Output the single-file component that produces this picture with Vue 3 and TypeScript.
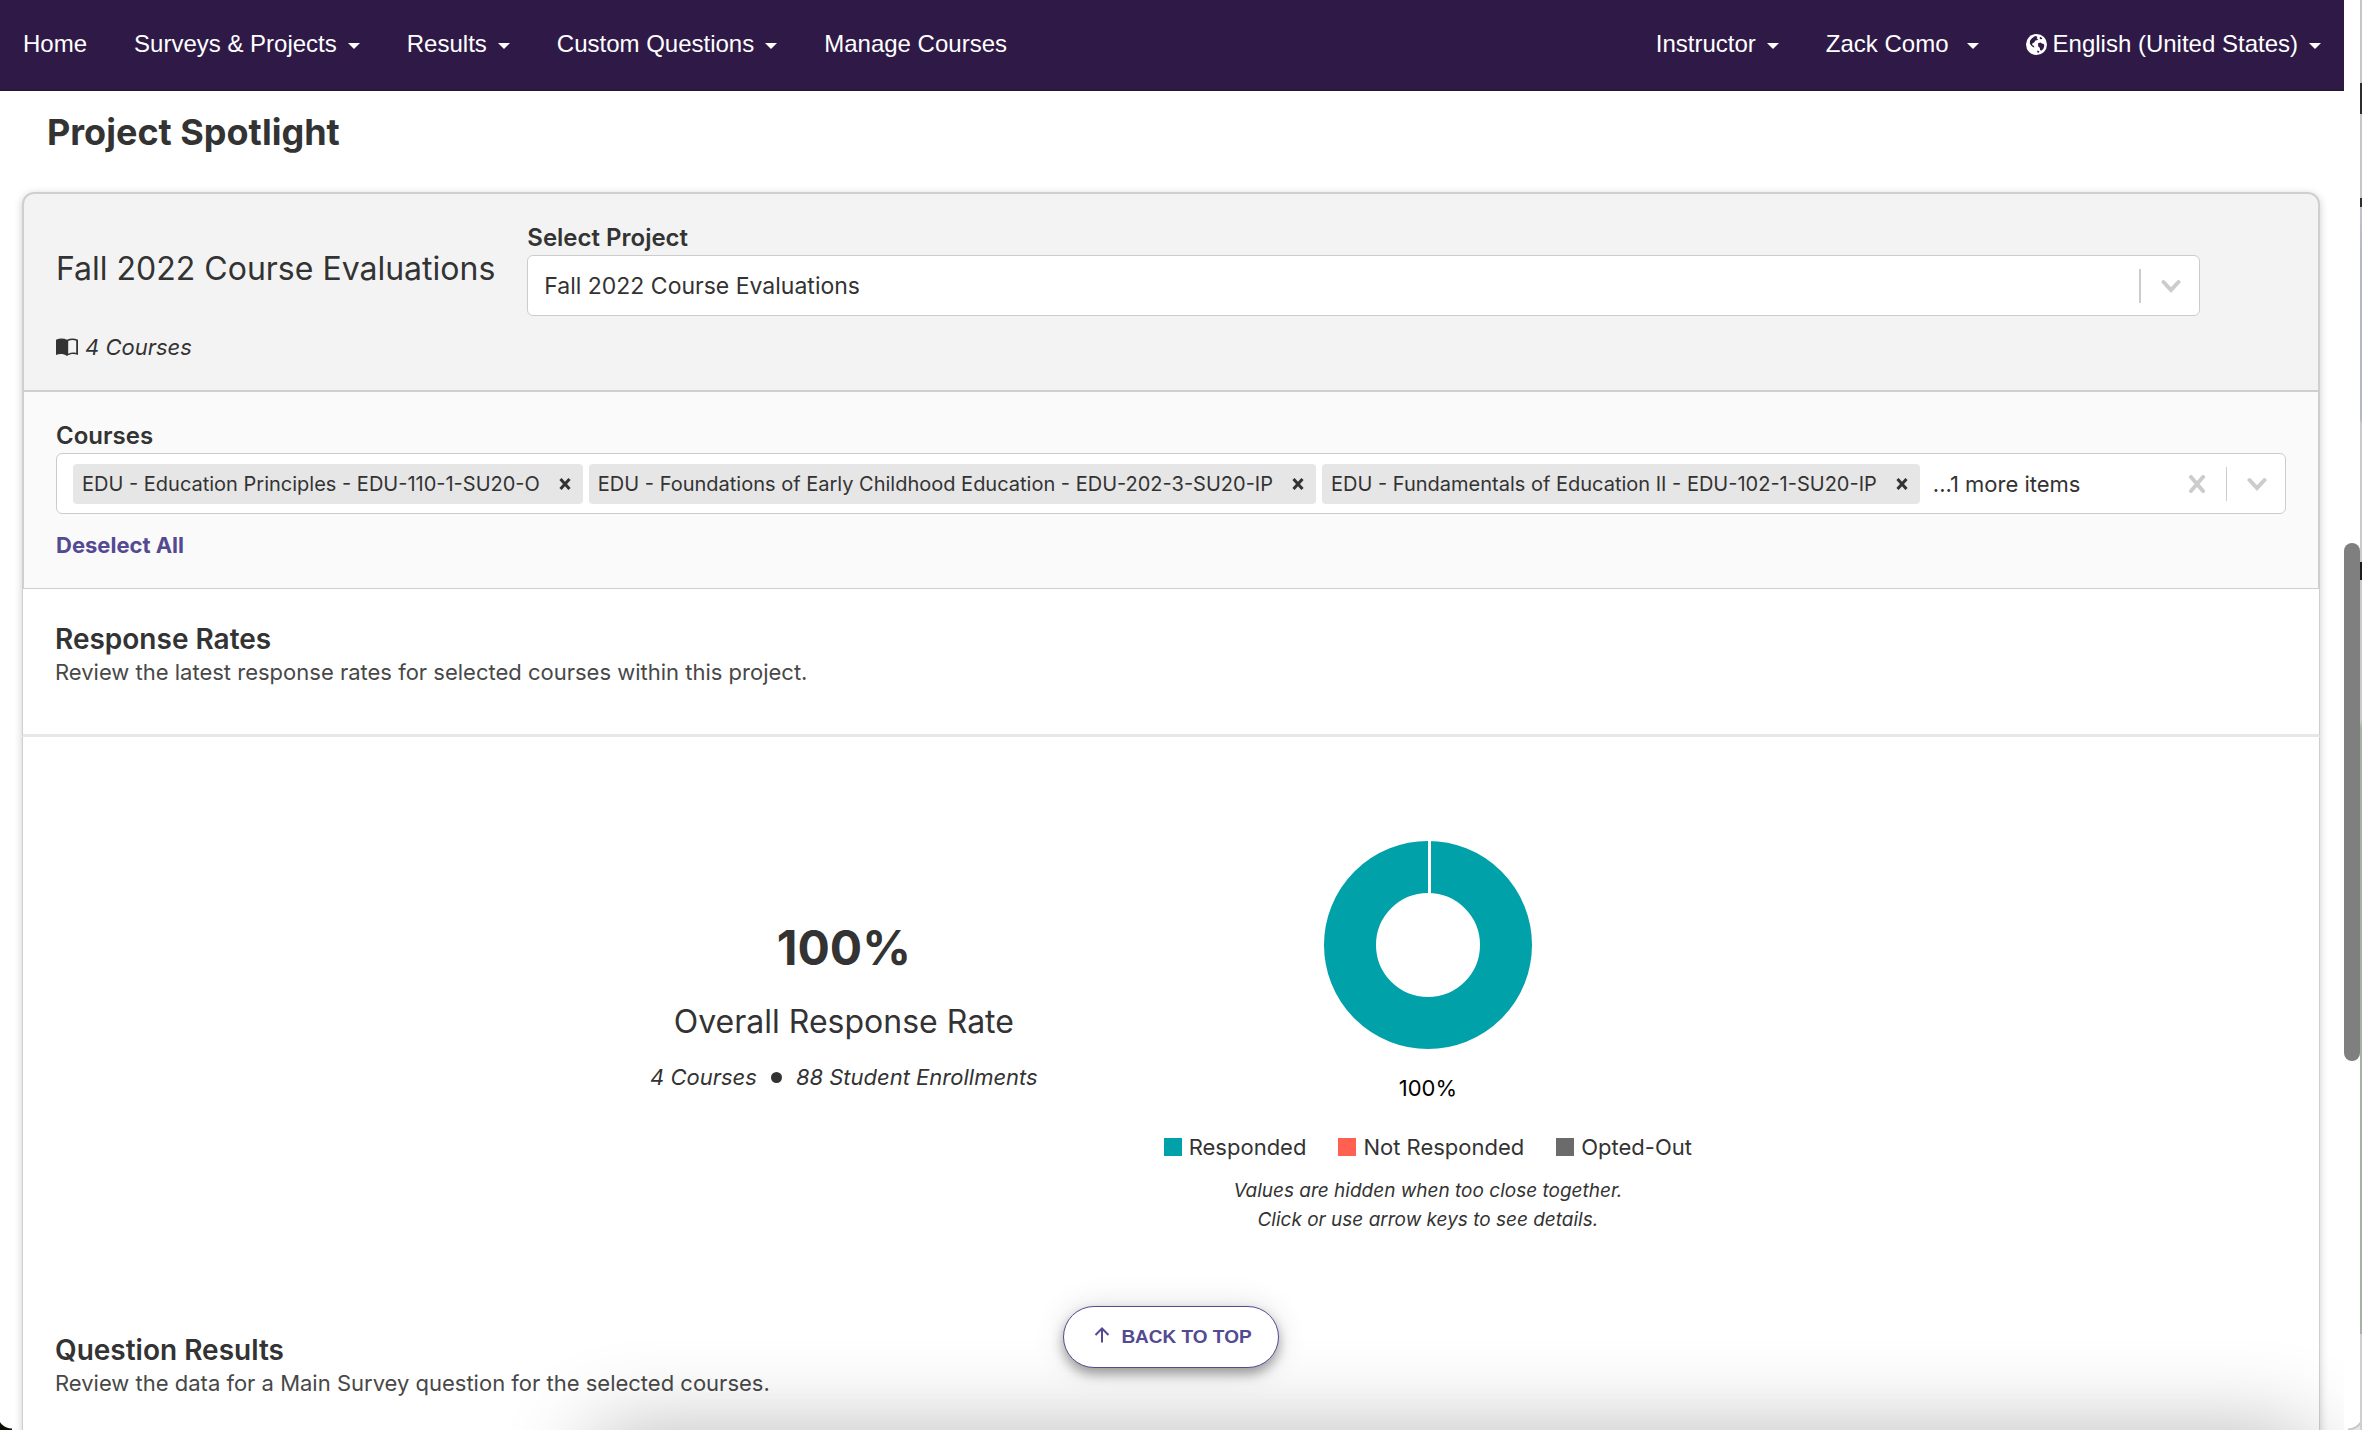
<script setup lang="ts">
import { ref } from 'vue'

interface NavItem {
  label: string
  menu: boolean
  icon?: boolean
}

const mainNav: NavItem[] = [
  { label: 'Home', menu: false },
  { label: 'Surveys & Projects', menu: true },
  { label: 'Results', menu: true },
  { label: 'Custom Questions', menu: true },
  { label: 'Manage Courses', menu: false },
]

const userNav: NavItem[] = [
  { label: 'Instructor', menu: true },
  { label: 'Zack Como', menu: true },
  { label: 'English (United States)', menu: true, icon: true },
]

const projects: string[] = ['Fall 2022 Course Evaluations']
const project = ref(projects[0])

const courses = ref<string[]>([
  'EDU - Education Principles - EDU-110-1-SU20-O',
  'EDU - Foundations of Early Childhood Education - EDU-202-3-SU20-IP',
  'EDU - Fundamentals of Education II - EDU-102-1-SU20-IP',
])

const legend = [
  { label: 'Responded', tone: 'teal' },
  { label: 'Not Responded', tone: 'coral' },
  { label: 'Opted-Out', tone: 'grey' },
]

function removeCourse(name: string) {
  courses.value = courses.value.filter((c) => c !== name)
}
</script>

<template>
  <div class="window">
    <div class="page">
      <header class="topbar">
        <nav class="nav" aria-label="Main">
          <template v-for="item in mainNav" :key="item.label">
            <button v-if="item.menu" type="button" class="nav-item">
              {{ item.label }}<span class="caret"></span>
            </button>
            <a v-else href="#" class="nav-item">{{ item.label }}</a>
          </template>
        </nav>
        <nav class="nav" aria-label="Account">
          <button v-for="item in userNav" :key="item.label" type="button" class="nav-item">
            <svg v-if="item.icon" class="globe" viewBox="0 0 22 22" aria-hidden="true">
              <circle cx="11" cy="11" r="11" fill="#fff" />
              <path d="M9.500 2.200 12 3l-.8 1.600 1.600.8-1.200 1.200-1.800.2-1.200 2-1.800.8-.4 1.800 1.800.8.600 1.600-1.200.2-2-1.600-1.600-2.400.2-2.800 2-2.800z" fill="#2f1a47" />
              <path d="m14.600 2.800 2.600 1.600-1 1.200-1.800-.4zM12.600 9.800l2.600-.8 1.400 1 2 .4.600 2-1 3-1.800 2-1.600-.4-.4-2.600-1.600-1.400z" fill="#2f1a47" />
              <path d="m12 17.400 2 .8-.6 1.400-1.800-.4z" fill="#2f1a47" />
            </svg>{{ item.label }}<span class="caret" :class="{ wide: item.label === 'Zack Como' }"></span>
          </button>
        </nav>
      </header>

      <main>
        <h1>Project Spotlight</h1>

        <div class="card">
          <section class="project">
            <div class="project-row">
              <h2 class="project-name">Fall 2022 Course Evaluations</h2>
              <div class="project-field">
                <label class="field-label" for="project">Select Project</label>
                <div class="control">
                  <select id="project" v-model="project">
                    <option v-for="p in projects" :key="p" :value="p">{{ p }}</option>
                  </select>
                  <span class="separator"></span>
                  <svg class="chevron" viewBox="0 0 20 20" aria-hidden="true"><path d="m2.500 6 7.500 8 7.500-8" /></svg>
                </div>
              </div>
            </div>
            <p class="meta">
              <svg class="book" viewBox="0 0 22 18" aria-hidden="true">
                <path d="M0 1.800C3.500.2 7.500 0 11 1.800 14.500 0 18.500.2 22 1.800V17c-3.500-1.500-7.500-1.500-11 1C7.500 15.500 3.500 15.500 0 17z" fill="#333" />
                <path d="M12.200 3c2.500-1.200 5.300-1.200 8-.3v12.200c-2.700-.6-5.500-.4-8 .8z" fill="#f3f3f3" />
              </svg>
              <em>4 Courses</em>
            </p>
          </section>

          <section class="courses">
            <label class="field-label" for="courses">Courses</label>
            <div class="control multi">
              <span v-for="course in courses" :key="course" class="chip">
                {{ course }}
                <button type="button" class="chip-remove" :aria-label="'Remove ' + course" @click="removeCourse(course)">
                  <svg viewBox="0 0 12 12" aria-hidden="true"><path d="m1.500 1 9 10M10.500 1l-9 10" /></svg>
                </button>
              </span>
              <span class="more">...1 more items</span>
              <input id="courses" type="text" autocomplete="off" />
              <button type="button" class="clear" aria-label="Clear all">
                <svg viewBox="0 0 16 18" aria-hidden="true"><path d="m2 2 12 14M14 2 2 16" /></svg>
              </button>
              <span class="separator"></span>
              <svg class="chevron" viewBox="0 0 20 20" aria-hidden="true"><path d="m2.500 6 7.500 8 7.500-8" /></svg>
            </div>
            <button type="button" class="deselect">Deselect All</button>
          </section>

          <section class="intro ruled">
            <h3>Response Rates</h3>
            <p>Review the latest response rates for selected courses within this project.</p>
          </section>

          <section class="rates">
            <div class="overall">
              <p class="percent">100%</p>
              <p class="caption">Overall Response Rate</p>
              <p class="counts"><em>4 Courses</em><span class="dot"></span><em>88 Student Enrollments</em></p>
            </div>
            <div class="chart">
              <svg class="donut" viewBox="0 0 208 208" role="img" aria-label="Responded 100%">
                <circle cx="104" cy="104" r="78" fill="none" stroke="#00a1a9" stroke-width="52" />
                <path d="M105.500 0v52.500" stroke="#fff" stroke-width="3" />
              </svg>
              <p class="value">100%</p>
              <ul class="legend">
                <li v-for="entry in legend" :key="entry.label">
                  <span class="swatch" :class="entry.tone"></span>{{ entry.label }}
                </li>
              </ul>
              <p class="hint">Values are hidden when too close together.<br />Click or use arrow keys to see details.</p>
            </div>
          </section>

          <section class="intro">
            <h3>Question Results</h3>
            <p>Review the data for a Main Survey question for the selected courses.</p>
          </section>
        </div>
      </main>
    </div>

    <div class="scrollbar"><div class="thumb"></div></div>
    <div class="edge"></div>
    <div class="bottom-shade"><div class="shade-source"></div></div>
    <div class="to-top-wrap">
      <button type="button" class="to-top">
        <svg viewBox="0 0 16 16" aria-hidden="true"><path d="M8 15.500V1.500M1.500 8 8 1.500 14.500 8" /></svg>
        BACK TO TOP
      </button>
    </div>
    <span class="corner left"></span>
    <span class="corner right"></span>
  </div>
</template>

<style>
body {
  margin: 0;
  background: #fff;
}
</style>

<style scoped>
* {
  box-sizing: border-box;
}

.window {
  position: relative;
  display: flex;
  height: 100vh;
  overflow: hidden;
  color: #333;
  font-family: Inter, 'Noto Sans', sans-serif;
  font-size: 22px;
  line-height: 32px;
}

h1, h2, h3, p, ul {
  margin: 0;
  padding: 0;
}

button {
  padding: 0;
  border: 0;
  background: none;
  color: inherit;
  font: inherit;
  cursor: pointer;
}

.page {
  flex: 1;
  min-width: 0;
  overflow: hidden;
}

.topbar {
  display: flex;
  justify-content: space-between;
  padding: 0 23px 1px;
  border-bottom: 2px solid #251a35;
  background: #2f1a47;
  color: #fff;
  font-family: 'Liberation Sans', Arial, sans-serif;
  font-size: 24px;
  line-height: 88px;
}

.nav {
  display: flex;
  gap: 47px;
}

.nav-item {
  display: flex;
  align-items: center;
  color: #fff;
  line-height: 88px;
  text-decoration: none;
  white-space: nowrap;
}

.caret {
  margin: 4px 0 0 11px;
  border: 6px solid transparent;
  border-top-color: #fff;
  border-bottom: 0;
}

.caret.wide {
  margin-left: 18px;
}

.globe {
  width: 21px;
  height: 21px;
  margin-right: 6px;
}

h1 {
  padding: 17px 47px 36px;
  font-size: 36px;
  font-weight: 700;
  line-height: 48px;
}

.card {
  margin: 0 24px 0 22px;
  border-radius: 12px 12px 0 0;
  box-shadow: 0 2px 8px rgba(0, 0, 0, 0.2);
}

.project,
.courses {
  padding: 28px 32px 27px;
  border: 2px solid #cecfcf;
}

.project {
  border-radius: 12px 12px 0 0;
  background: #f3f3f3;
}

.courses {
  border-width: 0 2px 1px;
  background: #fafafa;
}

.project-row {
  display: flex;
  align-items: center;
  gap: 32px;
}

.project-name,
.caption {
  font-size: 32px;
  font-weight: 400;
  line-height: 48px;
  white-space: nowrap;
}

.project-field {
  width: 75%;
}

.field-label {
  display: block;
  margin-bottom: 1px;
  font-size: 24px;
  font-weight: 600;
}

.control {
  display: flex;
  align-items: center;
  height: 61px;
  padding-right: 18px;
  border: 1px solid #ccc;
  border-radius: 6px;
  background: #fff;
}

select {
  flex: 1;
  height: 100%;
  padding: 0 16px;
  border: 0;
  appearance: none;
  background: none;
  color: #333;
  font: inherit;
  font-size: 23px;
}

.separator {
  width: 2px;
  height: 34px;
  margin-right: 20px;
  background: #ccc;
}

.chevron {
  width: 20px;
  height: 20px;
  fill: none;
  stroke: #ccc;
  stroke-width: 4;
  stroke-linecap: round;
}

.meta {
  display: flex;
  align-items: center;
  gap: 7px;
  margin-top: 15px;
}

.book {
  width: 22px;
  height: 18px;
}

.multi {
  gap: 6px;
  padding-left: 16px;
}

.multi .separator {
  width: 1px;
  margin-right: 14px;
}

.chip {
  display: flex;
  align-items: center;
  height: 40px;
  padding-left: 9px;
  border-radius: 4px;
  background: #e6e6e6;
  font-size: 20px;
  white-space: nowrap;
}

.chip-remove {
  display: flex;
  padding: 0 12px 0 19px;
}

.chip-remove svg {
  width: 12px;
  height: 12px;
  stroke: #333;
  stroke-width: 3;
}

.more {
  margin-left: 7px;
  white-space: nowrap;
}

#courses {
  flex: 1;
  min-width: 0;
  height: 40px;
  padding: 0;
  border: 0;
  outline: 0;
  background: none;
  font: inherit;
}

.clear {
  display: flex;
  margin-right: 15px;
}

.clear svg {
  width: 16px;
  height: 18px;
  stroke: #ccc;
  stroke-width: 4;
  stroke-linecap: round;
}

.deselect {
  display: block;
  margin-top: 15px;
  color: #544a92;
  font-weight: 700;
}

.intro,
.rates {
  border: 1px solid #cecfcf;
  border-width: 0 1px;
  background: #fff;
}

.intro {
  padding: 34px 32px 46px;
}

.intro.ruled {
  border-bottom: 3px solid #e6e8e8;
}

h3 {
  margin-bottom: 1px;
  font-size: 28px;
  font-weight: 600;
}

.intro p {
  color: #484848;
}

.rates {
  display: flex;
  justify-content: center;
  gap: 126px;
  padding: 104px 32px 66px;
  text-align: center;
}

.overall {
  padding-top: 75px;
}

.percent {
  font-size: 48px;
  font-weight: 700;
  line-height: 64px;
}

.caption {
  margin-top: 18px;
}

.counts {
  display: flex;
  align-items: center;
  justify-content: center;
  gap: 14px;
  margin-top: 15px;
}

.dot {
  width: 11px;
  height: 11px;
  border-radius: 50%;
  background: #333;
}

.donut {
  display: block;
  width: 208px;
  height: 208px;
  margin: 0 auto;
}

.value {
  margin-top: 23px;
  color: #000;
}

.legend {
  display: flex;
  gap: 32px;
  margin-top: 27px;
  list-style: none;
}

.legend li {
  display: flex;
  align-items: center;
  gap: 7px;
}

.swatch {
  width: 18px;
  height: 18px;
}

.teal {
  background: #00a1a9;
}

.coral {
  background: #ff6052;
}

.grey {
  background: #6b6b6b;
}

.hint {
  margin-top: 13px;
  font-size: 19px;
  font-style: italic;
  line-height: 29px;
}

.scrollbar {
  width: 16px;
  padding-top: 543px;
}

.thumb {
  height: 518px;
  border-radius: 8px;
  background: #7f7f7f;
}

.edge {
  width: 2px;
  background:
    linear-gradient(#2d2d30, #2d2d30) 0 83px / 2px 31px no-repeat,
    linear-gradient(#2d2d30, #2d2d30) 0 198px / 2px 9px no-repeat,
    linear-gradient(#1c1c1c, #1c1c1c) 0 562px / 2px 18px no-repeat,
    linear-gradient(#c4c6c9 0 200px, #b4b8c4 250px 420px, #c9cacc 423px 720px, #a5b3a3 728px 1334px, #cfcfd2 1334px);
}

.bottom-shade {
  position: absolute;
  right: 18px;
  bottom: 0;
  left: 0;
  height: 140px;
  overflow: hidden;
  pointer-events: none;
}

/* Hangs below the fold so that only its soft shadow shows */
.shade-source {
  position: absolute;
  top: 150px;
  right: 40px;
  left: 600px;
  height: 80px;
  box-shadow: 0 0 90px 6px rgba(0, 0, 0, 0.3);
}

.to-top-wrap {
  position: absolute;
  right: 20px;
  bottom: 62px;
  left: 0;
  display: flex;
  justify-content: center;
}

.to-top {
  display: flex;
  align-items: center;
  gap: 11px;
  height: 62px;
  padding: 0 26px 0 30px;
  border: 1px solid #544a92;
  border-radius: 31px;
  background: #fff;
  box-shadow: 0 6px 12px rgba(0, 0, 0, 0.35), 0 0 32px rgba(0, 0, 0, 0.12);
  color: #544a92;
  font-family: 'Liberation Sans', Arial, sans-serif;
  font-size: 19px;
  font-weight: 700;
}

.to-top svg {
  width: 16px;
  height: 16px;
  margin-bottom: 4px;
  fill: none;
  stroke: #544a92;
  stroke-width: 2;
}

.corner {
  position: absolute;
  bottom: 0;
  width: 12px;
  height: 16px;
}

.corner.left {
  left: 0;
  background: radial-gradient(circle at 100% 0, transparent 14px, #0c0c04 15px);
}

.corner.right {
  right: 2px;
  background: radial-gradient(circle at 0 0, transparent 14px, #b9bcc0 15px, #e4e6ea 17px);
}
</style>
